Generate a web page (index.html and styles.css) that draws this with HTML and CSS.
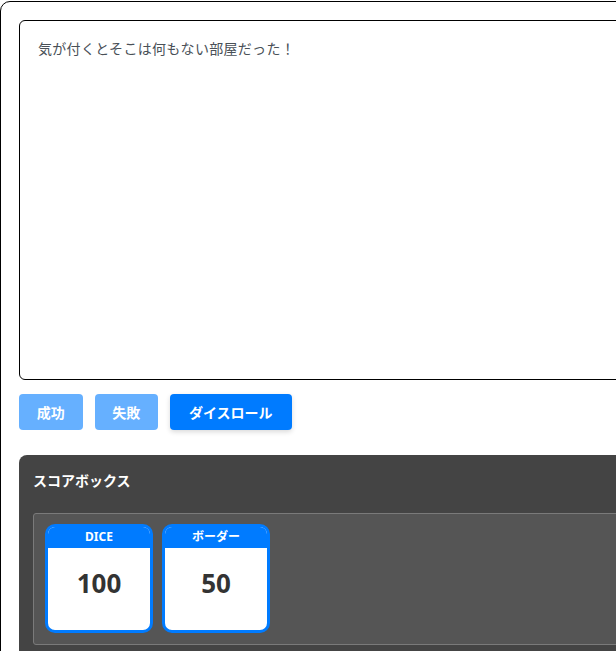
FILE: index.html
```html
<!DOCTYPE html>
<html lang="ja">
<head>
<meta charset="utf-8">
<title>スコアボックス</title>
<link rel="stylesheet" href="styles.css">
</head>
<body>
<div class="app">
  <div class="message">気が付くとそこは何もない部屋だった！</div>
  <div class="actions">
    <button class="btn btn-light">成功</button>
    <button class="btn btn-light">失敗</button>
    <button class="btn btn-primary">ダイスロール</button>
  </div>
  <section class="panel">
    <h2 class="panel-title">スコアボックス</h2>
    <div class="score-box">
      <div class="card">
        <div class="card-head">DICE</div>
        <div class="card-body">100</div>
      </div>
      <div class="card">
        <div class="card-head">ボーダー</div>
        <div class="card-body">50</div>
      </div>
    </div>
  </section>
</div>
</body>
</html>
```

FILE: styles.css
```css
html, body {
  margin: 0;
  padding: 0;
  background: #fff;
  overflow: hidden;
}
body {
  font-family: "Noto Sans", "Noto Sans CJK JP", sans-serif;
  padding-top: 1px;
}
.app {
  width: 800px;
  border: 1px solid #000;
  border-radius: 10px;
  padding: 18px;
  min-height: 700px;
}
.message {
  box-sizing: border-box;
  height: 360px;
  border: 1px solid #000;
  border-radius: 6px;
  padding: 17px 18px 16px;
  font-size: 14px;
  line-height: 21px;
  letter-spacing: 0.3px;
  color: #495057;
}
.actions {
  display: flex;
  gap: 12px;
  margin-top: 14px;
}
.btn {
  height: 36px;
  padding: 0;
  border: none;
  border-radius: 4px;
  font-family: "Noto Sans", "Noto Sans CJK JP", sans-serif;
  font-size: 14px;
  font-weight: 700;
  color: #fff;
}
.btn-light {
  width: 63.5px;
  background: #66b0ff;
}
.btn-primary {
  width: 121.5px;
  background: #007bff;
  box-shadow: 0 2px 5px rgba(0, 0, 0, 0.15);
}
.panel {
  margin-top: 25px;
  background: #444;
  border-radius: 8px;
  padding: 15px 14px 20px;
}
.panel-title {
  margin: 0 0 21px;
  font-size: 14px;
  line-height: 22px;
  font-weight: 700;
  color: #fff;
}
.score-box {
  display: flex;
  gap: 9px;
  background: #555;
  border: 1px solid #7a7a7a;
  border-radius: 3px;
  padding: 10px 11px 11px;
}
.card {
  box-sizing: border-box;
  width: 108px;
  height: 109px;
  border: 3px solid #007bff;
  border-radius: 10px;
  background: #fff;
  overflow: hidden;
  display: flex;
  flex-direction: column;
}
.card-head {
  height: 21px;
  background: #007bff;
  color: #fff;
  font-size: 12px;
  font-weight: 700;
  line-height: 19px;
  text-align: center;
}
.card-body {
  padding-top: 20px;
  line-height: 30px;
  font-size: 26px;
  font-weight: 700;
  color: #333;
  text-align: center;
}
```
